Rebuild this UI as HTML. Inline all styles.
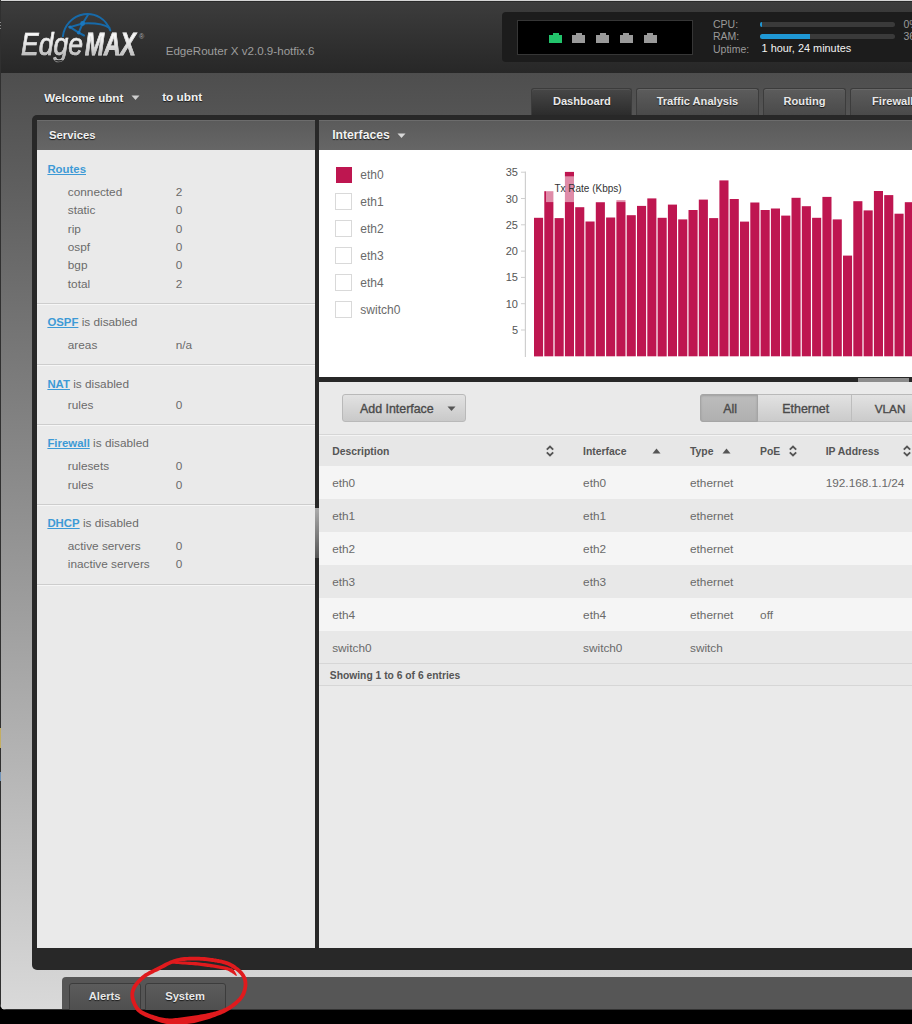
<!DOCTYPE html>
<html><head><meta charset="utf-8">
<style>
*{box-sizing:border-box;margin:0;padding:0}
html,body{width:912px;height:1024px;overflow:hidden;background:#000;font-family:"Liberation Sans",sans-serif}
.a{position:absolute}
#win{position:absolute;left:0;top:0;width:912px;height:1010px;border-bottom-left-radius:6px;overflow:hidden;
 background:linear-gradient(to bottom,#4e4e4e 0px,#4e4e4e 73px,#d9d9d9 1009px);}
.t{position:absolute;white-space:nowrap;line-height:1}
.lk{color:#3d9ad6;text-decoration:underline;font-weight:bold}
.sh{text-shadow:0 1px 1px #1a1a1a}
</style></head><body>
<div id="win">
<div class="a" style="left:0.0px;top:0.0px;width:912.0px;height:73.0px;background:linear-gradient(to bottom,#3d3d3d,#272727)"></div>
<div class="a" style="left:0.0px;top:1.0px;width:912.0px;height:1.0px;background:#2a2a2a"></div>
<div class="a" style="left:0.0px;top:0.0px;width:912.0px;height:1.0px;background:#d5d5d5"></div>
<div class="a" style="left:0.0px;top:0.0px;width:1.0px;height:1009.0px;background:#303030"></div>
<div class="a" style="left:0.0px;top:21.5px;width:1.0px;height:1.0px;background:#8a8a8a"></div>
<div class="a" style="left:0.0px;top:25.0px;width:1.0px;height:1.0px;background:#8a8a8a"></div>
<div class="a" style="left:0.0px;top:28.2px;width:1.0px;height:1.0px;background:#8a8a8a"></div>
<div class="a" style="left:0.0px;top:728.0px;width:1.0px;height:20.0px;background:#c4ae62"></div>
<div class="a" style="left:0.0px;top:771.7px;width:1.0px;height:9.5px;background:#6f93b9"></div>
<svg class="a" style="left:0;top:0" width="160" height="75">
<g fill="none" stroke="#1470b6" stroke-width="2" stroke-linecap="round" opacity="0.9">
<path d="M62.9 36.3 C64 26 72 16 84 14.2 C96 12.8 106 19 110.3 30.4"/>
<path d="M82.6 23.5 L70.1 27.1 L78.7 32.7 Z"/>
<path d="M82.6 23.5 L87.9 15"/>
<path d="M82.6 23.5 C92 23 103 23.5 109.6 28"/>
<path d="M78.7 32.7 L84 35.5"/>
</g>
<g fill="#1a78c0"><circle cx="82.6" cy="23.5" r="2.4"/><circle cx="70.1" cy="27.1" r="1.7"/><circle cx="78.7" cy="32.7" r="1.8"/></g>
</svg>
<div class="t" style="left:21px;top:27.8px;font-size:32px;line-height:1;font-style:italic"><span style="display:inline-block;transform:scaleX(0.83);transform-origin:0 0;width:80px;margin-right:-16.5px;background:linear-gradient(#f8f8f8 25%,#e0e0e0 55%,#b4b4b4 92%);-webkit-background-clip:text;background-clip:text;color:transparent;-webkit-text-stroke:0.7px rgba(220,220,220,0.55)">Edge</span><span style="display:inline-block;transform:scaleX(0.715);transform-origin:0 0;font-weight:bold;width:80px;background:linear-gradient(#f8f8f8 25%,#e0e0e0 55%,#b4b4b4 92%);-webkit-background-clip:text;background-clip:text;color:transparent;-webkit-text-stroke:0.9px rgba(215,215,215,0.6)">MAX</span></div>
<div class="t" style="left:139px;top:33px;font-size:7px;color:#aaa">&#174;</div>
<div class="t" style="left:165.7px;top:45.38px;font-size:11.60px;color:#9d9d9d;">EdgeRouter X v2.0.9-hotfix.6</div>
<div class="a" style="left:502.0px;top:12.0px;width:420.0px;height:50.0px;background:#1c1c1c;border-radius:4px"></div>
<div class="a" style="left:517.0px;top:20.0px;width:176.0px;height:35.0px;background:#000;border:1px solid #363636"></div>
<div class="a" style="left:549.0px;top:35.4px;width:13.0px;height:8.0px;background:#22c36b"></div>
<div class="a" style="left:552.5px;top:33.2px;width:6.0px;height:2.4px;background:#22c36b"></div>
<div class="a" style="left:572.0px;top:35.4px;width:13.0px;height:8.0px;background:#9a9a9a"></div>
<div class="a" style="left:575.5px;top:33.2px;width:6.0px;height:2.4px;background:#9a9a9a"></div>
<div class="a" style="left:596.0px;top:35.4px;width:13.0px;height:8.0px;background:#9a9a9a"></div>
<div class="a" style="left:599.5px;top:33.2px;width:6.0px;height:2.4px;background:#9a9a9a"></div>
<div class="a" style="left:619.8px;top:35.4px;width:13.0px;height:8.0px;background:#9a9a9a"></div>
<div class="a" style="left:623.3px;top:33.2px;width:6.0px;height:2.4px;background:#9a9a9a"></div>
<div class="a" style="left:643.8px;top:35.4px;width:13.0px;height:8.0px;background:#9a9a9a"></div>
<div class="a" style="left:647.3px;top:33.2px;width:6.0px;height:2.4px;background:#9a9a9a"></div>
<div class="t" style="left:713.0px;top:19.31px;font-size:10.50px;color:#9a9a9a;">CPU:</div>
<div class="t" style="left:713.0px;top:31.41px;font-size:10.50px;color:#9a9a9a;">RAM:</div>
<div class="t" style="left:713.0px;top:43.71px;font-size:10.50px;color:#9a9a9a;">Uptime:</div>
<div class="t" style="left:761.6px;top:43.37px;font-size:10.90px;color:#f2f2f2;">1 hour, 24 minutes</div>
<div class="a" style="left:760.0px;top:22.0px;width:135.0px;height:5.0px;background:#3a3a3a;border-radius:3px"></div>
<div class="a" style="left:760.0px;top:22.0px;width:2.0px;height:5.0px;background:#1f98d5;border-radius:3px 0 0 3px"></div>
<div class="a" style="left:760.0px;top:34.0px;width:135.0px;height:5.0px;background:#3a3a3a;border-radius:3px"></div>
<div class="a" style="left:760.0px;top:34.0px;width:49.5px;height:5.0px;background:#1f98d5;border-radius:3px 0 0 3px"></div>
<div class="t" style="left:903.4px;top:19.31px;font-size:10.50px;color:#9a9a9a;">0%</div>
<div class="t" style="left:903.4px;top:31.41px;font-size:10.50px;color:#9a9a9a;">36%</div>
<div class="t sh" style="left:44.3px;top:91.68px;font-size:11.6px;font-weight:bold;color:#f2f2f2">Welcome ubnt</div>
<svg class="a" style="left:131px;top:95px" width="9" height="6"><path d="M0.5 0.5 L8.5 0.5 L4.5 5 Z" fill="#cfcfcf"/></svg>
<div class="t sh" style="left:162.2px;top:92.11px;font-size:11.8px;font-weight:bold;color:#f2f2f2">to ubnt</div>
<div class="a" style="left:531.4px;top:87.8px;width:101.0px;height:26.9px;background:linear-gradient(#474747,#2c2c2c);border:1px solid #3c3c3c;border-bottom:none;border-radius:3px 3px 0 0;box-shadow:inset 0 1px 0 rgba(255,255,255,0.08)"></div>
<div class="t sh" style="left:531.4px;top:95.80px;width:101.0px;text-align:center;font-size:11.1px;font-weight:bold;color:#e8e8e8">Dashboard</div>
<div class="a" style="left:635.8px;top:87.8px;width:123.3px;height:26.9px;background:linear-gradient(#5c5c5c,#4a4a4a);border:1px solid #3c3c3c;border-bottom:none;border-radius:3px 3px 0 0;box-shadow:inset 0 1px 0 rgba(255,255,255,0.08)"></div>
<div class="t sh" style="left:635.8px;top:95.80px;width:123.3px;text-align:center;font-size:11.1px;font-weight:bold;color:#e8e8e8">Traffic Analysis</div>
<div class="a" style="left:762.9px;top:87.8px;width:83.3px;height:26.9px;background:linear-gradient(#5c5c5c,#4a4a4a);border:1px solid #3c3c3c;border-bottom:none;border-radius:3px 3px 0 0;box-shadow:inset 0 1px 0 rgba(255,255,255,0.08)"></div>
<div class="t sh" style="left:762.9px;top:95.80px;width:83.3px;text-align:center;font-size:11.1px;font-weight:bold;color:#e8e8e8">Routing</div>
<div class="a" style="left:849.7px;top:87.8px;width:86.0px;height:26.9px;background:linear-gradient(#5c5c5c,#4a4a4a);border:1px solid #3c3c3c;border-bottom:none;border-radius:3px 3px 0 0;box-shadow:inset 0 1px 0 rgba(255,255,255,0.08)"></div>
<div class="t sh" style="left:849.7px;top:95.80px;width:86.0px;text-align:center;font-size:11.1px;font-weight:bold;color:#e8e8e8">Firewall</div>
<div class="a" style="left:32.0px;top:114.5px;width:900.0px;height:855.5px;background:#282828;border-radius:5px"></div>
<div class="a" style="left:37.0px;top:120.0px;width:278.0px;height:30.0px;background:linear-gradient(#5b5b5b,#666);border-top:1px solid #6c6c6c"></div>
<div class="a" style="left:37.0px;top:150.0px;width:278.0px;height:798.0px;background:#eaeaea"></div>
<div class="t sh" style="left:49px;top:130.23px;font-size:11.3px;font-weight:bold;color:#f2f2f2">Services</div>
<div class="t" style="left:47.4px;top:164.11px;font-size:11.80px;color:#6a6a6a"><span class="lk" style="font-size:11.4px">Routes</span></div>
<div class="t" style="left:67.8px;top:186.71px;font-size:11.80px;color:#6a6a6a;">connected</div>
<div class="t" style="left:175.7px;top:186.71px;font-size:11.80px;color:#6a6a6a;">2</div>
<div class="t" style="left:67.8px;top:205.11px;font-size:11.80px;color:#6a6a6a;">static</div>
<div class="t" style="left:175.7px;top:205.11px;font-size:11.80px;color:#6a6a6a;">0</div>
<div class="t" style="left:67.8px;top:223.51px;font-size:11.80px;color:#6a6a6a;">rip</div>
<div class="t" style="left:175.7px;top:223.51px;font-size:11.80px;color:#6a6a6a;">0</div>
<div class="t" style="left:67.8px;top:241.91px;font-size:11.80px;color:#6a6a6a;">ospf</div>
<div class="t" style="left:175.7px;top:241.91px;font-size:11.80px;color:#6a6a6a;">0</div>
<div class="t" style="left:67.8px;top:260.31px;font-size:11.80px;color:#6a6a6a;">bgp</div>
<div class="t" style="left:175.7px;top:260.31px;font-size:11.80px;color:#6a6a6a;">0</div>
<div class="t" style="left:67.8px;top:278.71px;font-size:11.80px;color:#6a6a6a;">total</div>
<div class="t" style="left:175.7px;top:278.71px;font-size:11.80px;color:#6a6a6a;">2</div>
<div class="a" style="left:37.0px;top:303.0px;width:278.0px;height:1.0px;background:#cdcdcd"></div>
<div class="a" style="left:37.0px;top:304.0px;width:278.0px;height:1.0px;background:#f6f6f6"></div>
<div class="t" style="left:47.4px;top:317.31px;font-size:11.80px;color:#6a6a6a"><span class="lk" style="font-size:11.4px">OSPF</span> is disabled</div>
<div class="t" style="left:67.8px;top:339.81px;font-size:11.80px;color:#6a6a6a;">areas</div>
<div class="t" style="left:175.7px;top:339.81px;font-size:11.80px;color:#6a6a6a;">n/a</div>
<div class="a" style="left:37.0px;top:364.0px;width:278.0px;height:1.0px;background:#cdcdcd"></div>
<div class="a" style="left:37.0px;top:365.0px;width:278.0px;height:1.0px;background:#f6f6f6"></div>
<div class="t" style="left:47.4px;top:378.51px;font-size:11.80px;color:#6a6a6a"><span class="lk" style="font-size:11.4px">NAT</span> is disabled</div>
<div class="t" style="left:67.8px;top:400.31px;font-size:11.80px;color:#6a6a6a;">rules</div>
<div class="t" style="left:175.7px;top:400.31px;font-size:11.80px;color:#6a6a6a;">0</div>
<div class="a" style="left:37.0px;top:424.0px;width:278.0px;height:1.0px;background:#cdcdcd"></div>
<div class="a" style="left:37.0px;top:425.0px;width:278.0px;height:1.0px;background:#f6f6f6"></div>
<div class="t" style="left:47.4px;top:438.41px;font-size:11.80px;color:#6a6a6a"><span class="lk" style="font-size:11.4px">Firewall</span> is disabled</div>
<div class="t" style="left:67.8px;top:461.31px;font-size:11.80px;color:#6a6a6a;">rulesets</div>
<div class="t" style="left:175.7px;top:461.31px;font-size:11.80px;color:#6a6a6a;">0</div>
<div class="t" style="left:67.8px;top:479.61px;font-size:11.80px;color:#6a6a6a;">rules</div>
<div class="t" style="left:175.7px;top:479.61px;font-size:11.80px;color:#6a6a6a;">0</div>
<div class="a" style="left:37.0px;top:504.3px;width:278.0px;height:1.0px;background:#cdcdcd"></div>
<div class="a" style="left:37.0px;top:505.3px;width:278.0px;height:1.0px;background:#f6f6f6"></div>
<div class="t" style="left:47.4px;top:518.11px;font-size:11.80px;color:#6a6a6a"><span class="lk" style="font-size:11.4px">DHCP</span> is disabled</div>
<div class="t" style="left:67.8px;top:540.61px;font-size:11.80px;color:#6a6a6a;">active servers</div>
<div class="t" style="left:175.7px;top:540.61px;font-size:11.80px;color:#6a6a6a;">0</div>
<div class="t" style="left:67.8px;top:558.71px;font-size:11.80px;color:#6a6a6a;">inactive servers</div>
<div class="t" style="left:175.7px;top:558.71px;font-size:11.80px;color:#6a6a6a;">0</div>
<div class="a" style="left:37.0px;top:583.5px;width:278.0px;height:1.0px;background:#cdcdcd"></div>
<div class="a" style="left:37.0px;top:584.5px;width:278.0px;height:1.0px;background:#f6f6f6"></div>
<div class="a" style="left:315.0px;top:507.8px;width:4.3px;height:50.3px;background:linear-gradient(#acacac,#555)"></div>
<div class="a" style="left:319.3px;top:120.0px;width:600.0px;height:30.0px;background:linear-gradient(#5b5b5b,#666);border-top:1px solid #6c6c6c"></div>
<div class="t sh" style="left:332.2px;top:129.47px;font-size:12.2px;font-weight:bold;color:#f2f2f2">Interfaces</div>
<svg class="a" style="left:397.4px;top:133px" width="9" height="6"><path d="M0.5 0.5 L8.5 0.5 L4.5 5 Z" fill="#d8d8d8"/></svg>
<div class="a" style="left:319.3px;top:150.0px;width:600.0px;height:227.0px;background:#fff"></div>
<div class="a" style="left:336.0px;top:166.9px;width:15.6px;height:15.8px;background:#be1650"></div>
<div class="t" style="left:360.3px;top:168.64px;font-size:12.00px;color:#6a6a6a;">eth0</div>
<div class="a" style="left:335.2px;top:193.2px;width:16.5px;height:16.8px;background:#fff;border:1px solid #d9d9d9"></div>
<div class="t" style="left:360.3px;top:195.69px;font-size:12.00px;color:#6a6a6a;">eth1</div>
<div class="a" style="left:335.2px;top:220.2px;width:16.5px;height:16.8px;background:#fff;border:1px solid #d9d9d9"></div>
<div class="t" style="left:360.3px;top:222.74px;font-size:12.00px;color:#6a6a6a;">eth2</div>
<div class="a" style="left:335.2px;top:247.2px;width:16.5px;height:16.8px;background:#fff;border:1px solid #d9d9d9"></div>
<div class="t" style="left:360.3px;top:249.79px;font-size:12.00px;color:#6a6a6a;">eth3</div>
<div class="a" style="left:335.2px;top:274.3px;width:16.5px;height:16.8px;background:#fff;border:1px solid #d9d9d9"></div>
<div class="t" style="left:360.3px;top:276.84px;font-size:12.00px;color:#6a6a6a;">eth4</div>
<div class="a" style="left:335.2px;top:301.4px;width:16.5px;height:16.8px;background:#fff;border:1px solid #d9d9d9"></div>
<div class="t" style="left:360.3px;top:303.89px;font-size:12.00px;color:#6a6a6a;">switch0</div>
<svg class="a" style="left:0;top:0" width="912" height="400"><rect x="524.8" y="171.5" width="1.2" height="185.5" fill="#cfcfcf"/><rect x="521" y="329.5" width="4" height="1" fill="#cfcfcf"/><text x="518" y="334.0" text-anchor="end" font-family="Liberation Sans" font-size="11" fill="#555">5</text><rect x="521" y="303.2" width="4" height="1" fill="#cfcfcf"/><text x="518" y="307.7" text-anchor="end" font-family="Liberation Sans" font-size="11" fill="#555">10</text><rect x="521" y="276.9" width="4" height="1" fill="#cfcfcf"/><text x="518" y="281.4" text-anchor="end" font-family="Liberation Sans" font-size="11" fill="#555">15</text><rect x="521" y="250.6" width="4" height="1" fill="#cfcfcf"/><text x="518" y="255.1" text-anchor="end" font-family="Liberation Sans" font-size="11" fill="#555">20</text><rect x="521" y="224.3" width="4" height="1" fill="#cfcfcf"/><text x="518" y="228.8" text-anchor="end" font-family="Liberation Sans" font-size="11" fill="#555">25</text><rect x="521" y="198.0" width="4" height="1" fill="#cfcfcf"/><text x="518" y="202.5" text-anchor="end" font-family="Liberation Sans" font-size="11" fill="#555">30</text><rect x="521" y="171.7" width="4" height="1" fill="#cfcfcf"/><text x="518" y="176.2" text-anchor="end" font-family="Liberation Sans" font-size="11" fill="#555">35</text><g fill="#be1650"><rect x="534.0" y="217.8" width="9.1" height="138.6"/><rect x="544.3" y="191.2" width="9.1" height="165.1"/><rect x="554.6" y="218.1" width="9.1" height="138.2"/><rect x="564.9" y="171.9" width="9.1" height="184.4"/><rect x="575.2" y="207.2" width="9.1" height="149.1"/><rect x="585.5" y="221.5" width="9.1" height="134.8"/><rect x="595.8" y="202.2" width="9.1" height="154.1"/><rect x="606.1" y="217.5" width="9.1" height="138.8"/><rect x="616.4" y="200.2" width="9.1" height="156.1"/><rect x="626.7" y="215.2" width="9.1" height="141.1"/><rect x="637.0" y="205.9" width="9.1" height="150.4"/><rect x="647.3" y="198.4" width="9.1" height="157.9"/><rect x="657.6" y="217.8" width="9.1" height="138.6"/><rect x="667.9" y="204.6" width="9.1" height="151.7"/><rect x="678.2" y="219.4" width="9.1" height="136.9"/><rect x="688.5" y="210.0" width="9.1" height="146.3"/><rect x="698.8" y="199.6" width="9.1" height="156.7"/><rect x="709.1" y="218.1" width="9.1" height="138.2"/><rect x="719.4" y="180.4" width="9.1" height="175.9"/><rect x="729.7" y="199.0" width="9.1" height="157.3"/><rect x="740.0" y="221.6" width="9.1" height="134.7"/><rect x="750.3" y="202.5" width="9.1" height="153.8"/><rect x="760.6" y="210.0" width="9.1" height="146.3"/><rect x="770.9" y="208.5" width="9.1" height="147.8"/><rect x="781.2" y="215.6" width="9.1" height="140.7"/><rect x="791.5" y="197.8" width="9.1" height="158.6"/><rect x="801.8" y="206.2" width="9.1" height="150.1"/><rect x="812.1" y="217.8" width="9.1" height="138.5"/><rect x="822.4" y="196.9" width="9.1" height="159.4"/><rect x="832.7" y="219.4" width="9.1" height="136.9"/><rect x="843.0" y="255.6" width="9.1" height="100.7"/><rect x="853.3" y="201.2" width="9.1" height="155.1"/><rect x="863.6" y="210.4" width="9.1" height="145.9"/><rect x="873.9" y="191.0" width="9.1" height="165.3"/><rect x="884.2" y="195.1" width="9.1" height="161.2"/><rect x="894.5" y="213.7" width="9.1" height="142.6"/><rect x="904.8" y="202.2" width="9.1" height="154.1"/></g><rect x="546" y="176.3" width="80" height="25.8" fill="#fff" fill-opacity="0.5"/><text x="554.4" y="192" font-family="Liberation Sans" font-size="10" fill="#333">Tx Rate (Kbps)</text></svg>
<div class="a" style="left:319.3px;top:377.0px;width:600.0px;height:4.5px;background:#282828"></div>
<div class="a" style="left:858.0px;top:377.5px;width:51.0px;height:4.0px;background:#8c8c8c"></div>
<div class="a" style="left:319.3px;top:381.5px;width:600.0px;height:566.5px;background:#eaeaea"></div>
<div class="a" style="left:342.1px;top:394.3px;width:123.5px;height:28.2px;background:linear-gradient(#e2e2e2,#c9c9c9);border:1px solid #b9b9b9;border-radius:3px"></div>
<div class="t" style="left:360px;top:403.20px;font-size:12.4px;color:#4a4a4a;-webkit-text-stroke:0.35px #4a4a4a">Add Interface</div>
<svg class="a" style="left:447px;top:406px" width="9" height="6"><path d="M0.5 0.5 L8.5 0.5 L4.5 5 Z" fill="#555"/></svg>
<div class="a" style="left:699.6px;top:394.4px;width:260.0px;height:27.5px;background:linear-gradient(#e2e2e2,#cbcbcb);border:1px solid #b9b9b9;border-radius:3px"></div>
<div class="a" style="left:699.6px;top:394.4px;width:58.5px;height:27.5px;background:linear-gradient(#bdbdbd,#b0b0b0);border:1px solid #a5a5a5;border-radius:3px 0 0 3px;box-shadow:inset 0 1px 2px rgba(0,0,0,0.15)"></div>
<div class="a" style="left:850.5px;top:395.0px;width:1.0px;height:26.5px;background:#bdbdbd"></div>
<div class="t" style="left:700.8px;width:58.5px;text-align:center;top:403.20px;font-size:12.4px;color:#4a4a4a;-webkit-text-stroke:0.35px #4a4a4a">All</div>
<div class="t" style="left:759.5px;width:92.5px;text-align:center;top:403.20px;font-size:12.4px;color:#4a4a4a;-webkit-text-stroke:0.35px #4a4a4a">Ethernet</div>
<div class="t" style="left:874.7px;top:403.71px;font-size:11.8px;color:#4a4a4a;-webkit-text-stroke:0.35px #4a4a4a">VLAN</div>
<div class="a" style="left:319.3px;top:434.0px;width:600.0px;height:1.0px;background:#d6d6d6"></div>
<div class="a" style="left:319.3px;top:435.0px;width:600.0px;height:1.0px;background:#f4f4f4"></div>
<div class="a" style="left:319.3px;top:436.0px;width:600.0px;height:29.5px;background:#e7e7e7"></div>
<div class="t" style="left:332.2px;top:446.90px;font-size:10.4px;font-weight:bold;color:#555">Description</div>
<div class="t" style="left:583.1px;top:446.90px;font-size:10.4px;font-weight:bold;color:#555">Interface</div>
<div class="t" style="left:690.0px;top:446.90px;font-size:10.4px;font-weight:bold;color:#555">Type</div>
<div class="t" style="left:760.1px;top:446.90px;font-size:10.4px;font-weight:bold;color:#555">PoE</div>
<div class="t" style="left:825.7px;top:446.90px;font-size:10.4px;font-weight:bold;color:#555">IP Address</div>
<svg class="a" style="left:545.3px;top:444.5px" width="10" height="12"><path d="M1.8 4.6 L5 1.6 L8.2 4.6 M1.8 7.4 L5 10.4 L8.2 7.4" fill="none" stroke="#555" stroke-width="1.9"/></svg>
<svg class="a" style="left:652.0px;top:447.6px" width="9" height="6"><path d="M0.5 5.5 L8.5 5.5 L4.5 0.5 Z" fill="#555"/></svg>
<svg class="a" style="left:721.8px;top:447.6px" width="9" height="6"><path d="M0.5 5.5 L8.5 5.5 L4.5 0.5 Z" fill="#555"/></svg>
<svg class="a" style="left:788.4px;top:444.5px" width="10" height="12"><path d="M1.8 4.6 L5 1.6 L8.2 4.6 M1.8 7.4 L5 10.4 L8.2 7.4" fill="none" stroke="#555" stroke-width="1.9"/></svg>
<svg class="a" style="left:901.6px;top:444.5px" width="10" height="12"><path d="M1.8 4.6 L5 1.6 L8.2 4.6 M1.8 7.4 L5 10.4 L8.2 7.4" fill="none" stroke="#555" stroke-width="1.9"/></svg>
<div class="a" style="left:319.3px;top:465.5px;width:600.0px;height:33.0px;background:#f5f5f5"></div>
<div class="t" style="left:332.2px;top:478.11px;font-size:11.80px;color:#6a6a6a;">eth0</div>
<div class="t" style="left:583.1px;top:478.11px;font-size:11.80px;color:#6a6a6a;">eth0</div>
<div class="t" style="left:690.0px;top:478.11px;font-size:11.80px;color:#6a6a6a;">ethernet</div>
<div class="t" style="left:825.7px;top:478.11px;font-size:11.80px;color:#6a6a6a;">192.168.1.1/24</div>
<div class="a" style="left:319.3px;top:498.5px;width:600.0px;height:33.0px;background:#e8e8e8"></div>
<div class="t" style="left:332.2px;top:511.11px;font-size:11.80px;color:#6a6a6a;">eth1</div>
<div class="t" style="left:583.1px;top:511.11px;font-size:11.80px;color:#6a6a6a;">eth1</div>
<div class="t" style="left:690.0px;top:511.11px;font-size:11.80px;color:#6a6a6a;">ethernet</div>
<div class="a" style="left:319.3px;top:531.5px;width:600.0px;height:33.0px;background:#f5f5f5"></div>
<div class="t" style="left:332.2px;top:544.11px;font-size:11.80px;color:#6a6a6a;">eth2</div>
<div class="t" style="left:583.1px;top:544.11px;font-size:11.80px;color:#6a6a6a;">eth2</div>
<div class="t" style="left:690.0px;top:544.11px;font-size:11.80px;color:#6a6a6a;">ethernet</div>
<div class="a" style="left:319.3px;top:564.5px;width:600.0px;height:33.0px;background:#e8e8e8"></div>
<div class="t" style="left:332.2px;top:577.11px;font-size:11.80px;color:#6a6a6a;">eth3</div>
<div class="t" style="left:583.1px;top:577.11px;font-size:11.80px;color:#6a6a6a;">eth3</div>
<div class="t" style="left:690.0px;top:577.11px;font-size:11.80px;color:#6a6a6a;">ethernet</div>
<div class="a" style="left:319.3px;top:597.5px;width:600.0px;height:33.0px;background:#f5f5f5"></div>
<div class="t" style="left:332.2px;top:610.11px;font-size:11.80px;color:#6a6a6a;">eth4</div>
<div class="t" style="left:583.1px;top:610.11px;font-size:11.80px;color:#6a6a6a;">eth4</div>
<div class="t" style="left:690.0px;top:610.11px;font-size:11.80px;color:#6a6a6a;">ethernet</div>
<div class="t" style="left:760.1px;top:610.11px;font-size:11.80px;color:#6a6a6a;">off</div>
<div class="a" style="left:319.3px;top:630.5px;width:600.0px;height:33.0px;background:#e8e8e8"></div>
<div class="t" style="left:332.2px;top:643.11px;font-size:11.80px;color:#6a6a6a;">switch0</div>
<div class="t" style="left:583.1px;top:643.11px;font-size:11.80px;color:#6a6a6a;">switch0</div>
<div class="t" style="left:690.0px;top:643.11px;font-size:11.80px;color:#6a6a6a;">switch</div>
<div class="a" style="left:319.3px;top:663.0px;width:600.0px;height:23.2px;background:#e8e8e8;border-top:1px solid #d6d6d6;border-bottom:1px solid #d6d6d6"></div>
<div class="t" style="left:329.8px;top:671.28px;font-size:10.3px;font-weight:bold;color:#555">Showing 1 to 6 of 6 entries</div>
<div class="a" style="left:62.3px;top:977.0px;width:900.0px;height:40.0px;background:#565656;border-radius:4px"></div>
<div class="a" style="left:0.0px;top:1009.0px;width:912.0px;height:1.5px;background:#333"></div>
<div class="a" style="left:68.6px;top:982.8px;width:72.0px;height:30.0px;background:linear-gradient(#5c5c5c,#4e4e4e);border:1px solid #3c3c3c;border-radius:3px 3px 0 0"></div>
<div class="t sh" style="left:68.6px;width:72.0px;text-align:center;top:991.12px;font-size:11.2px;font-weight:bold;color:#e8e8e8">Alerts</div>
<div class="a" style="left:144.6px;top:982.8px;width:81.0px;height:30.0px;background:linear-gradient(#5c5c5c,#4e4e4e);border:1px solid #3c3c3c;border-radius:3px 3px 0 0"></div>
<div class="t sh" style="left:144.6px;width:81.0px;text-align:center;top:991.12px;font-size:11.2px;font-weight:bold;color:#e8e8e8">System</div>
</div>
<svg class="a" style="left:0;top:0" width="912" height="1024">
<path d="M176.5 962.3 L178.1 961.9 L179.7 961.6 L181.2 961.3 L182.8 961.1 L184.4 960.9 L186.0 960.8 L187.7 960.6 L189.3 960.6 L190.9 960.5 L192.5 960.5 L194.2 960.5 L195.8 960.5 L197.4 960.5 L199.1 960.6 L200.7 960.7 L202.4 960.8 L204.1 960.9 L205.8 961.1 L207.4 961.3 L209.1 961.5 L210.7 961.7 L212.2 961.9 L213.7 962.1 L215.2 962.4 L216.6 962.6 L217.9 962.9 L219.2 963.1 L220.4 963.3 L221.6 963.6 L222.8 963.9 L223.9 964.2 L225.0 964.5 L226.0 964.9 L227.1 965.3 L228.1 965.7 L229.1 966.2 L230.2 966.7 L231.2 967.4 L232.3 968.0 L233.4 968.7 L234.4 969.4 L235.4 970.2 L236.4 971.0 L237.3 971.8 L238.2 972.6 L239.0 973.4 L239.7 974.1 L240.3 974.9 L240.9 975.6 L241.4 976.4 L241.8 977.1 L242.2 977.9 L242.6 978.6 L242.8 979.3 L243.1 980.1 L243.3 980.9 L243.4 981.7 L243.5 982.5 L243.6 983.3 L243.6 984.2 L243.6 985.1 L243.5 986.0 L243.4 987.0 L243.2 988.0 L243.0 989.0 L242.7 990.1 L242.4 991.1 L242.0 992.1 L241.6 993.1 L241.1 994.1 L240.6 995.1 L239.9 996.0 L239.2 996.9 L238.4 997.9 L237.5 998.8 L236.6 999.8 L235.5 1000.8 L234.4 1001.7 L233.3 1002.6 L232.1 1003.5 L230.9 1004.4 L229.7 1005.2 L228.5 1006.0 L227.2 1006.7 L226.0 1007.4 L224.8 1008.0 L223.5 1008.6 L222.3 1009.2 L220.9 1009.7 L219.6 1010.1 L218.2 1010.6 L216.8 1011.0 L215.4 1011.4 L213.9 1011.8 L212.3 1012.2 L210.7 1012.6 L209.1 1013.0 L207.4 1013.3 L205.7 1013.7 L204.0 1014.0 L202.2 1014.3 L200.4 1014.6 L198.5 1014.9 L196.7 1015.2 L194.9 1015.5 L193.1 1015.7 L191.3 1016.0 L189.6 1016.2 L187.8 1016.5 L186.0 1016.8 L184.2 1017.0 L182.5 1017.3 L180.7 1017.5 L178.9 1017.8 L177.2 1018.0 L175.5 1018.1 L173.8 1018.3 L172.1 1018.4 L170.6 1018.4 L169.0 1018.4 L167.5 1018.3 L166.1 1018.2 L164.6 1018.0 L163.2 1017.8 L161.8 1017.5 L160.4 1017.2 L159.1 1016.9 L157.7 1016.5 L156.4 1016.1 L155.1 1015.7 L153.8 1015.2 L152.5 1014.8 L151.2 1014.4 L150.0 1013.9 L148.7 1013.5 L147.6 1013.0 L146.4 1012.6 L145.3 1012.1 L144.3 1011.6 L143.3 1011.0 L142.3 1010.5 L141.4 1009.9 L140.6 1009.3 L139.9 1008.6 L139.2 1007.9 L138.6 1007.1 L137.9 1006.2 L137.4 1005.2 L136.8 1004.2 L136.3 1003.2 L135.8 1002.1 L135.4 1001.1 L135.1 1000.0 L134.8 999.0 L134.6 998.1 L134.4 997.2 L134.3 996.3 L134.2 995.5 L134.2 994.7 L134.2 994.0 L134.3 993.2 L134.4 992.5 L134.6 991.8 L134.8 991.0 L135.1 990.3 L135.4 989.5 L135.7 988.7 L136.2 987.9 L136.6 987.1 L137.2 986.3 L137.8 985.4 L138.5 984.6 L139.2 983.7 L140.0 982.8 L140.8 981.9 L141.7 981.1 L142.5 980.3 L143.4 979.5 L144.3 978.7 L145.2 978.0 L146.0 977.3 L146.9 976.8 L147.7 976.2 L148.6 975.7 L149.5 975.2 L150.4 974.7 L151.4 974.2 L152.4 973.7 L153.5 973.2 L154.6 972.6 L155.8 972.0 L157.2 971.4 L158.6 970.7 L160.0 969.9 L161.6 969.1 L163.2 968.2 L164.9 967.4 L166.5 966.5 L168.2 965.6 L169.9 964.8 L171.6 964.1 L173.3 963.4 L174.9 962.8 Z M173.7 959.2 L171.9 959.9 L170.2 960.6 L168.4 961.4 L166.6 962.2 L164.8 963.1 L163.1 964.0 L161.4 964.9 L159.8 965.7 L158.3 966.5 L156.8 967.3 L155.4 968.0 L154.2 968.6 L153.0 969.2 L151.8 969.8 L150.7 970.3 L149.7 970.8 L148.6 971.3 L147.6 971.9 L146.7 972.4 L145.7 973.0 L144.7 973.6 L143.8 974.3 L142.8 975.0 L141.9 975.8 L140.9 976.6 L140.0 977.5 L139.0 978.4 L138.1 979.3 L137.2 980.2 L136.3 981.2 L135.5 982.2 L134.8 983.1 L134.1 984.1 L133.4 985.1 L132.8 986.1 L132.3 987.0 L131.9 988.0 L131.5 988.9 L131.2 989.8 L130.9 990.8 L130.7 991.8 L130.5 992.7 L130.4 993.7 L130.4 994.7 L130.4 995.7 L130.5 996.8 L130.6 997.8 L130.8 998.9 L131.1 1000.0 L131.4 1001.2 L131.8 1002.4 L132.3 1003.6 L132.8 1004.8 L133.4 1006.0 L134.0 1007.1 L134.7 1008.3 L135.4 1009.4 L136.2 1010.4 L137.1 1011.4 L138.0 1012.3 L139.0 1013.1 L140.1 1013.9 L141.2 1014.6 L142.3 1015.2 L143.5 1015.8 L144.7 1016.4 L145.9 1017.0 L147.2 1017.5 L148.4 1018.0 L149.7 1018.5 L150.9 1019.0 L152.2 1019.5 L153.5 1020.0 L154.8 1020.5 L156.2 1021.1 L157.6 1021.6 L159.1 1022.0 L160.5 1022.5 L162.1 1022.9 L163.6 1023.3 L165.2 1023.7 L166.9 1024.0 L168.6 1024.2 L170.3 1024.4 L172.1 1024.5 L173.9 1024.6 L175.7 1024.6 L177.6 1024.6 L179.4 1024.6 L181.3 1024.5 L183.2 1024.4 L185.1 1024.2 L187.0 1024.0 L188.8 1023.8 L190.6 1023.6 L192.5 1023.3 L194.3 1022.9 L196.2 1022.5 L198.1 1022.1 L199.9 1021.6 L201.8 1021.1 L203.6 1020.6 L205.4 1020.1 L207.2 1019.5 L209.0 1018.9 L210.6 1018.4 L212.3 1017.8 L213.8 1017.2 L215.4 1016.7 L216.9 1016.1 L218.3 1015.5 L219.8 1015.0 L221.2 1014.4 L222.6 1013.8 L224.0 1013.2 L225.4 1012.5 L226.7 1011.8 L228.0 1011.0 L229.4 1010.3 L230.6 1009.4 L231.9 1008.5 L233.2 1007.6 L234.5 1006.7 L235.7 1005.7 L237.0 1004.7 L238.1 1003.6 L239.3 1002.6 L240.3 1001.5 L241.3 1000.4 L242.2 999.3 L243.1 998.2 L243.8 997.1 L244.5 995.9 L245.1 994.7 L245.6 993.5 L246.0 992.3 L246.4 991.1 L246.7 989.9 L246.9 988.7 L247.1 987.6 L247.3 986.4 L247.4 985.3 L247.4 984.2 L247.4 983.2 L247.3 982.1 L247.2 981.1 L247.0 980.1 L246.7 979.1 L246.4 978.1 L246.1 977.1 L245.6 976.2 L245.1 975.2 L244.6 974.3 L244.0 973.4 L243.3 972.5 L242.5 971.6 L241.7 970.7 L240.8 969.8 L239.8 968.9 L238.8 968.0 L237.7 967.2 L236.6 966.4 L235.5 965.6 L234.4 964.8 L233.2 964.1 L232.0 963.4 L230.9 962.8 L229.7 962.2 L228.5 961.7 L227.3 961.3 L226.1 960.9 L224.9 960.5 L223.7 960.2 L222.5 959.9 L221.2 959.6 L219.9 959.4 L218.6 959.1 L217.2 958.9 L215.8 958.6 L214.3 958.4 L212.8 958.1 L211.2 957.9 L209.6 957.7 L207.9 957.5 L206.2 957.3 L204.4 957.1 L202.7 957.0 L201.0 956.9 L199.2 956.8 L197.5 956.7 L195.8 956.7 L194.1 956.7 L192.5 956.7 L190.8 956.7 L189.1 956.8 L187.5 956.9 L185.8 957.0 L184.1 957.1 L182.4 957.3 L180.6 957.5 L178.9 957.9 L177.2 958.2 L175.5 958.7 Z" fill="#e01a1d" fill-rule="evenodd"/>
<path d="M172.0 963.0 L173.1 963.4 L174.6 963.7 L176.3 963.9 L178.3 964.1 L180.4 964.2 L182.6 964.4 L184.9 964.6 L187.2 964.8 L189.5 964.9 L191.7 965.1 L193.8 965.3 L195.7 965.5 L197.4 965.6 L199.2 965.8 L200.9 966.0 L202.7 966.2 L204.3 966.4 L206.0 966.7 L207.6 966.9 L209.2 967.1 L210.8 967.4 L212.3 967.6 L213.8 967.8 L215.2 968.1 L216.6 968.3 L218.0 968.6 L219.4 968.8 L220.7 969.0 L222.0 969.3 L223.2 969.5 L224.4 969.8 L225.5 970.0 L226.6 970.3 L227.6 970.6 L228.5 970.9 L229.3 971.2 L229.8 972.0 L230.5 972.2 L231.2 972.5 L231.9 972.9 L232.6 973.4 L233.2 973.8 L233.8 974.2 L234.4 974.7 L234.9 975.1 L235.4 975.5 L235.9 975.8 L236.3 976.0 L236.9 975.4 L236.7 975.0 L236.5 974.6 L236.3 974.0 L236.0 973.4 L235.6 972.7 L235.2 972.0 L234.7 971.3 L234.1 970.5 L233.5 969.8 L232.7 969.0 L231.9 968.3 L230.7 968.2 L229.7 967.7 L228.6 967.4 L227.5 967.0 L226.4 966.7 L225.2 966.4 L223.9 966.2 L222.6 965.9 L221.3 965.7 L220.0 965.4 L218.6 965.2 L217.2 965.0 L215.8 964.7 L214.3 964.5 L212.8 964.2 L211.3 964.0 L209.7 963.8 L208.1 963.5 L206.5 963.3 L204.8 963.1 L203.1 962.9 L201.3 962.7 L199.6 962.5 L197.8 962.3 L195.9 962.1 L194.0 962.0 L191.9 961.9 L189.7 961.8 L187.4 961.7 L185.0 961.6 L182.7 961.6 L180.5 961.5 L178.4 961.5 L176.4 961.5 L174.7 961.6 L173.2 961.7 L172.0 962.0 Z" fill="#e01a1d"/>
</svg>
</body></html>
